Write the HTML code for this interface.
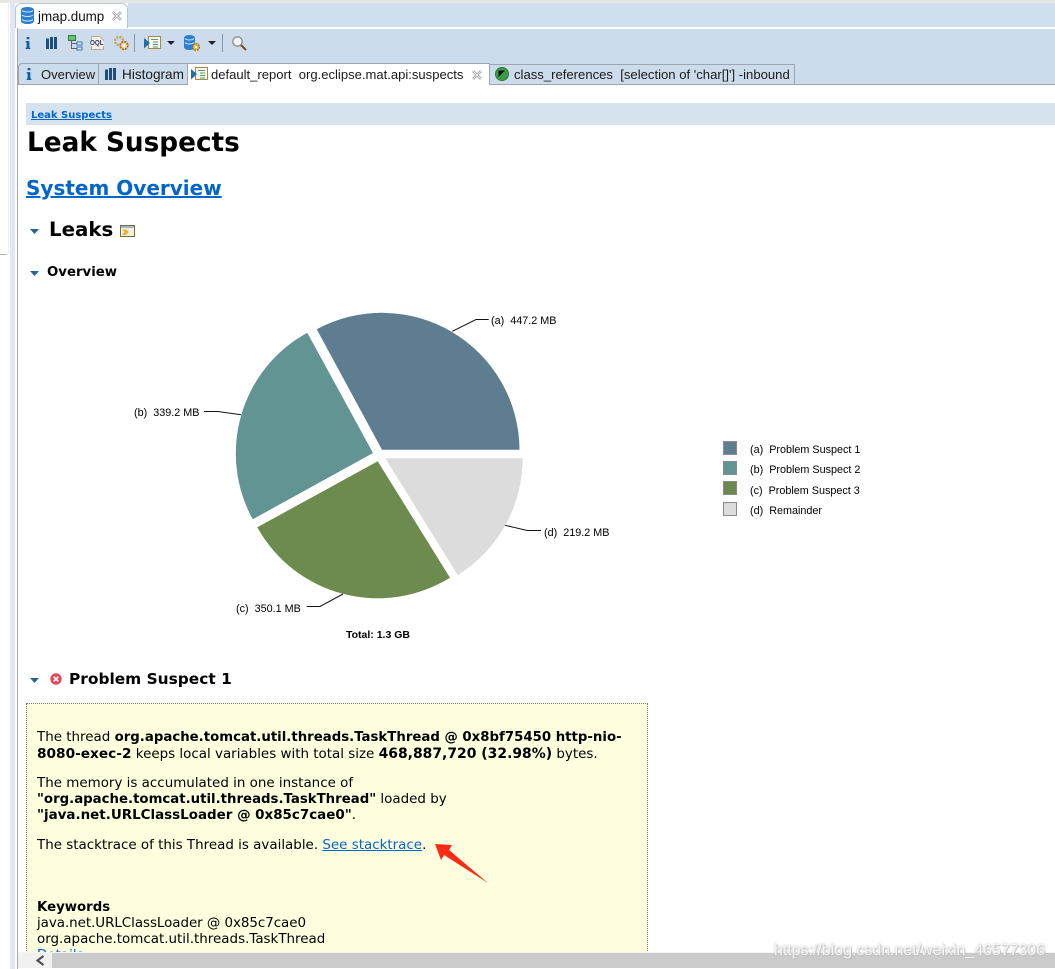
<!DOCTYPE html>
<html><head><meta charset="utf-8"><style>
html,body{margin:0;padding:0;background:#fff}
#p{position:relative;width:1055px;height:969px;overflow:hidden;background:#fff;font-family:"DejaVu Sans","Liberation Sans",sans-serif;color:#000}
.a{position:absolute;white-space:pre}
.r{position:absolute}
.t{font:13px/16px "Liberation Sans",sans-serif;color:#1a1a1a}
.b{font:13.450px/16px "DejaVu Sans",sans-serif;color:#000}
.b b{font-weight:bold;font-size:13.300px}
.c{font:10.800px/12px "Liberation Sans",sans-serif;color:#000}
a{color:#0066cc;text-decoration:underline}
svg{position:absolute;overflow:visible}
</style></head><body><div id="p">
<div class="r" style="left:0;top:0;width:1055px;height:3px;background:#e6e6e6"></div>
<div class="r" style="left:0;top:3px;width:8px;height:251px;background:#fff;border-right:1px solid #f0f0f0"></div>
<div class="r" style="left:0;top:254px;width:7px;height:1px;background:#b4b4b4"></div>
<div class="r" style="left:10px;top:3px;width:5px;height:966px;background:#e1e7f5"></div>
<div class="r" style="left:17px;top:28px;width:1px;height:941px;background:#a6a6a6"></div>

<div class="r" style="left:128px;top:3px;width:927px;height:24px;background:#d0dfee"></div>
<div class="r" style="left:15px;top:3px;width:113px;height:25px;background:#fff;border:1px solid #b8c6d4;border-bottom:0;border-radius:6px 6px 0 0;box-sizing:border-box"></div>
<div class="r" style="left:18px;top:29px;width:1037px;height:56px;background:#cddcec"></div>

<svg style="left:21px;top:7px" width="13" height="17" viewBox="0 0 13 17"><path d="M0 3C0 1 3 0 6.500 0S13 1 13 3V14C13 16 10 17 6.500 17S0 16 0 14Z" fill="#2a7fd0"/><path d="M1 3.500C3 5.500 10 5.500 12 3.500M1 8C3 10 10 10 12 8M1 12.500C3 14.500 10 14.500 12 12.500" stroke="#cfe4f7" fill="none"/></svg>
<div class="a t" style="left:38px;top:9px;font-size:13.400px;color:#111">jmap.dump</div>
<svg style="left:112px;top:11px" width="10" height="10" viewBox="0 0 10 10"><path d="M1 1L9 9M9 1L1 9" stroke="#8a8a8a" stroke-width="2.400"/><path d="M1 1L9 9M9 1L1 9" stroke="#fff" stroke-width=".9"/></svg>

<!-- toolbar icons -->
<svg style="left:25px;top:37px" width="6" height="12" viewBox="0 0 6 13"><path d="M1.500 0H4.500V2.500H1.500ZM.5 4.500H4.500V11.500H5.500V13H.5V11.500H1.500V6H.5Z" fill="#0f5f9e"/></svg>
<svg style="left:46px;top:37px" width="11" height="12" viewBox="0 0 11 12"><path d="M0 1.500H3V12H0ZM4 0H7V12H4ZM8 0H11V12H8Z" fill="#1f4e7c"/></svg>
<svg style="left:68px;top:35px" width="15" height="16" viewBox="0 0 15 16"><rect x=".5" y=".5" width="7" height="5" fill="#6fbf73" stroke="#2f7a3b"/><rect x="9" y="7" width="5" height="3" fill="#dfeaf5" stroke="#3b78b5"/><rect x="9" y="12" width="5" height="3" fill="#dfeaf5" stroke="#3b78b5"/><path d="M3.500 6V13.500H9M3.500 8.500H9" stroke="#666" fill="none"/></svg>
<svg style="left:91px;top:36px" width="13" height="14" viewBox="0 0 13 14"><path d="M.5 .5H9L12.500 4V13.500H.5Z" fill="#f4efe2" stroke="#b8ad90"/><rect x="0" y="5" width="13" height="5" fill="#f4efe2"/></svg>
<div class="a" style="left:90px;top:39px;font:bold 7px/9px 'Liberation Sans',sans-serif;color:#2b3d78;transform:scaleX(.9);transform-origin:left">OQL</div>
<svg style="left:113px;top:35px" width="17" height="16" viewBox="0 0 17 16"><circle cx="6" cy="6" r="4" fill="none" stroke="#c9a25a" stroke-width="2.400" stroke-dasharray="2 1.200"/><circle cx="11" cy="10.500" r="3.800" fill="#f1d9a0" stroke="#b06a1c" stroke-width="1.800" stroke-dasharray="2 1"/><circle cx="11" cy="10.500" r="1.300" fill="#fff"/></svg>
<div class="r" style="left:134px;top:34px;width:1px;height:18px;background:#8a97a5"></div>
<svg style="left:144px;top:36px" width="17" height="14" viewBox="0 0 17 14"><rect x="4.500" y=".5" width="12" height="12" fill="#f6f6ee" stroke="#a58a4c"/><path d="M7 3.500H14M9 6H14M9 8.500H14M9 11H14" stroke="#4aa36a"/><path d="M0 2L6 7L0 12.500Z" fill="#1d6fb0"/></svg>
<svg style="left:167px;top:41px" width="8" height="4" viewBox="0 0 8 4"><path d="M0 0H8L4 4Z" fill="#222"/></svg>
<svg style="left:184px;top:35px" width="17" height="17" viewBox="0 0 17 17"><path d="M0 3C0 1 3 0 5.500 0S11 1 11 3V12C11 14 8 15 5.500 15S0 14 0 12Z" fill="#2a7fd0"/><path d="M1 3.500C3 5.500 8 5.500 10 3.500M1 7.500C3 9.500 8 9.500 10 7.500" stroke="#cfe4f7" fill="none"/><circle cx="12" cy="12" r="3.400" fill="#e7b94c" stroke="#9a6a1d" stroke-width="1.300" stroke-dasharray="1.800 .8"/><circle cx="12" cy="12" r="1.100" fill="#fff"/></svg>
<svg style="left:208px;top:41px" width="8" height="4" viewBox="0 0 8 4"><path d="M0 0H8L4 4Z" fill="#222"/></svg>
<div class="r" style="left:222px;top:34px;width:1px;height:18px;background:#8a97a5"></div>
<svg style="left:232px;top:36px" width="15" height="15" viewBox="0 0 15 15"><circle cx="5.500" cy="5.500" r="4.700" fill="#f3f6f8" stroke="#8d8d80" stroke-width="1.300"/><path d="M9 9L14 14" stroke="#7a5230" stroke-width="2.200"/></svg>

<!-- view tabs -->
<div class="r" style="left:18px;top:63px;width:81px;height:22px;border:1px solid #9da6b0;border-bottom:1px solid #9da6b0;border-radius:4px 0 0 0;box-sizing:border-box"></div>
<div class="r" style="left:98px;top:63px;width:90px;height:22px;border:1px solid #9da6b0;box-sizing:border-box"></div>
<div class="r" style="left:188px;top:63px;width:302px;height:23px;background:#fff;border-top:1px solid #9da6b0"></div>
<div class="r" style="left:489px;top:64px;width:1px;height:21px;background:#9da6b0"></div>
<div class="r" style="left:490px;top:84px;width:565px;height:1px;background:#9da6b0"></div>
<div class="r" style="left:490px;top:64px;width:305px;height:1px;background:#9da6b0"></div>
<div class="r" style="left:794px;top:64px;width:1px;height:21px;background:#9da6b0"></div>

<svg style="left:26px;top:68px" width="6" height="12" viewBox="0 0 6 13"><path d="M1.500 0H4.500V2.500H1.500ZM.5 4.500H4.500V11.500H5.500V13H.5V11.500H1.500V6H.5Z" fill="#0f5f9e"/></svg>
<div class="a t" style="left:41px;top:67px">Overview</div>
<svg style="left:105px;top:68px" width="11" height="12" viewBox="0 0 11 12"><path d="M0 1.500H3V12H0ZM4 0H7V12H4ZM8 0H11V12H8Z" fill="#1f4e7c"/></svg>
<div class="a t" style="left:122px;top:67px;font-size:13.600px">Histogram</div>
<svg style="left:191px;top:67px" width="17" height="14" viewBox="0 0 17 14"><rect x="4.500" y=".5" width="12" height="12" fill="#f6f6ee" stroke="#a58a4c"/><path d="M7 3.500H14M9 6H14M9 8.500H14M9 11H14" stroke="#4aa36a"/><path d="M0 2L6 7L0 12.500Z" fill="#1d6fb0"/></svg>
<div class="a t" style="left:211px;top:67px;font-size:13.050px">default_report  org.eclipse.mat.api:suspects</div>
<svg style="left:472px;top:70px" width="10" height="10" viewBox="0 0 10 10"><path d="M1 1L9 9M9 1L1 9" stroke="#8a8a8a" stroke-width="2.400"/><path d="M1 1L9 9M9 1L1 9" stroke="#fff" stroke-width=".9"/></svg>
<svg style="left:495px;top:67px" width="14" height="14" viewBox="0 0 14 14"><circle cx="7" cy="7" r="6.500" fill="#3f9a45" stroke="#2c7a34"/><path d="M3.500 3.500H10L3.500 10Z" fill="#111"/></svg>
<div class="a t" style="left:514px;top:67px;font-size:13.100px">class_references  [selection of 'char[]'] -inbound</div>

<!-- breadcrumb -->
<div class="r" style="left:26px;top:103px;width:1029px;height:22px;background:#d6e3ef"></div>
<div class="a" style="left:31px;top:109px;font:bold 10px/13px 'DejaVu Sans',sans-serif"><a href="#">Leak Suspects</a></div>

<div class="a" id="h1" style="left:27px;top:126px;font:bold 26.300px/34px 'DejaVu Sans',sans-serif">Leak Suspects</div>
<div class="a" style="left:26px;top:174px;font:bold 20px/28px 'DejaVu Sans',sans-serif"><a href="#">System Overview</a></div>

<svg style="left:30px;top:229px" width="9" height="5" viewBox="0 0 9 5"><path d="M0 0H9L4.500 5Z" fill="#2a6496"/></svg>
<div class="a" style="left:49px;top:216px;font:bold 19.800px/28px 'DejaVu Sans',sans-serif">Leaks</div>
<svg style="left:120px;top:225px" width="15" height="12" viewBox="0 0 15 12"><rect x=".5" y=".5" width="14" height="11" fill="#f4f0df" stroke="#7a6a3c"/><rect x="1" y="1" width="13" height="2" fill="#9db4cc"/><path d="M2 4.500H6L9 7L6 10H2L4.500 7Z" fill="#e9b233"/></svg>

<svg style="left:30px;top:271px" width="9" height="5" viewBox="0 0 9 5"><path d="M0 0H9L4.500 5Z" fill="#2a6496"/></svg>
<div class="a" style="left:47px;top:265px;font:bold 13.300px/16px 'DejaVu Sans',sans-serif">Overview</div>

<!-- pie -->
<svg style="left:0;top:0" width="1055" height="969" viewBox="0 0 1055 969">
<path d="M382 449.700L519.500 449.700A137.500 137.500 0 0 0 316.700 329.300Z" fill="#5e7d90"/>
<path d="M373 453L307.300 332.700A137.500 137.500 0 0 0 252.700 519.300Z" fill="#629494"/>
<path d="M377.700 461.300L257.300 527.300A137.500 137.500 0 0 0 450 577.700Z" fill="#6e8b4f"/>
<path d="M385.300 458.300L522.700 458.300A137.500 137.500 0 0 1 457.700 575Z" fill="#dcdcdc"/>
<g fill="none" stroke="#111" stroke-width="1">
<path d="M452.300 331.300L476 319.500H488.700"/>
<path d="M241 414.700L218 411.500H204"/>
<path d="M343 594L320 606.500H306.700"/>
<path d="M505 525.300L527.300 530.500H541"/>
</g>
<g fill="#6b7f8e" stroke="#8a8a8a" stroke-width="1">
<rect x="723.500" y="441.500" width="13" height="13" fill="#5e7d90"/>
<rect x="723.500" y="461.500" width="13" height="13" fill="#629494"/>
<rect x="723.500" y="481.500" width="13" height="13" fill="#6e8b4f"/>
<rect x="723.500" y="502.500" width="13" height="13" fill="#dcdcdc"/>
</g>
</svg>
<div class="a c" style="left:491px;top:315px">(a)  447.2 MB</div>
<div class="a c" style="left:134px;top:407px">(b)  339.2 MB</div>
<div class="a c" style="left:236px;top:603px">(c)  350.1 MB</div>
<div class="a c" style="left:544px;top:527px">(d)  219.2 MB</div>
<div class="a c" style="left:750px;top:444px">(a)  Problem Suspect 1</div>
<div class="a c" style="left:750px;top:464px">(b)  Problem Suspect 2</div>
<div class="a c" style="left:750px;top:485px">(c)  Problem Suspect 3</div>
<div class="a c" style="left:750px;top:505px">(d)  Remainder</div>
<div class="a c" style="left:346px;top:629px;font-weight:bold;font-size:10.500px">Total: 1.3 GB</div>

<!-- suspect -->
<svg style="left:30px;top:678px" width="9" height="5" viewBox="0 0 9 5"><path d="M0 0H9L4.500 5Z" fill="#2a6496"/></svg>
<svg style="left:50px;top:673px" width="12" height="12" viewBox="0 0 12 12"><circle cx="6" cy="6" r="5.700" fill="#e2495a"/><path d="M3.700 3.700L8.300 8.300M8.300 3.700L3.700 8.300" stroke="#fff" stroke-width="1.700"/></svg>
<div class="a" style="left:69px;top:668px;font:bold 15.400px/22px 'DejaVu Sans',sans-serif">Problem Suspect 1</div>

<div class="r" style="left:26px;top:703px;width:622px;height:250px;background:#ffffdf;border:1px dotted #77776a;box-sizing:border-box"></div>
<div class="a b" style="left:37px;top:730px">The thread <b>org.apache.tomcat.util.threads.TaskThread @ 0x8bf75450 http-nio-</b></div>
<div class="a b" style="left:37px;top:746px"><b style="font-size:13.700px">8080-exec-2</b> keeps local variables with total size <b style="font-size:13.950px">468,887,720 (32.98%)</b> bytes.</div>
<div class="a b" style="left:37px;top:776px">The memory is accumulated in one instance of</div>
<div class="a b" style="left:37px;top:792px"><b>"org.apache.tomcat.util.threads.TaskThread"</b> loaded by</div>
<div class="a b" style="left:37px;top:808px"><b style="font-size:13.450px">"java.net.URLClassLoader @ 0x85c7cae0"</b>.</div>
<div class="a b" style="left:37px;top:838px">The stacktrace of this Thread is available. <a href="#">See stacktrace</a>.</div>
<div class="a b" style="left:37px;top:900px"><b>Keywords</b></div>
<div class="a b" style="left:37px;top:916px;letter-spacing:-.05px">java.net.URLClassLoader @ 0x85c7cae0</div>
<div class="a b" style="left:37px;top:932px">org.apache.tomcat.util.threads.TaskThread</div>
<div class="a b" style="left:37px;top:948px"><a href="#" style="text-decoration:none">Details »</a></div>

<svg style="left:0;top:0" width="1055" height="969" viewBox="0 0 1055 969"><path d="M435 844L452 845L449 850L488 883L444 855L441 860Z" fill="#fa2a14"/></svg>

<!-- scrollbar -->
<div class="r" style="left:18px;top:952px;width:1037px;height:1px;background:#f4f4f4"></div>
<div class="r" style="left:18px;top:953px;width:34px;height:15px;background:#f1f1f1"></div>
<div class="r" style="left:52px;top:953px;width:1003px;height:15px;background:#cbcbcb"></div>
<svg style="left:35px;top:955px" width="10" height="11" viewBox="0 0 10 11"><path d="M8.500 1L2.500 5.500L8.500 10" fill="none" stroke="#505050" stroke-width="2.200"/></svg>
<div class="a" style="left:774px;top:941px;font:15.950px/20px 'Liberation Sans',sans-serif;color:#f4f4f4;text-shadow:0 0 2px #bbb,1px 1px 1px #c4c4c4">https://blog.csdn.net/weixin_46577306</div>
</div></body></html>
